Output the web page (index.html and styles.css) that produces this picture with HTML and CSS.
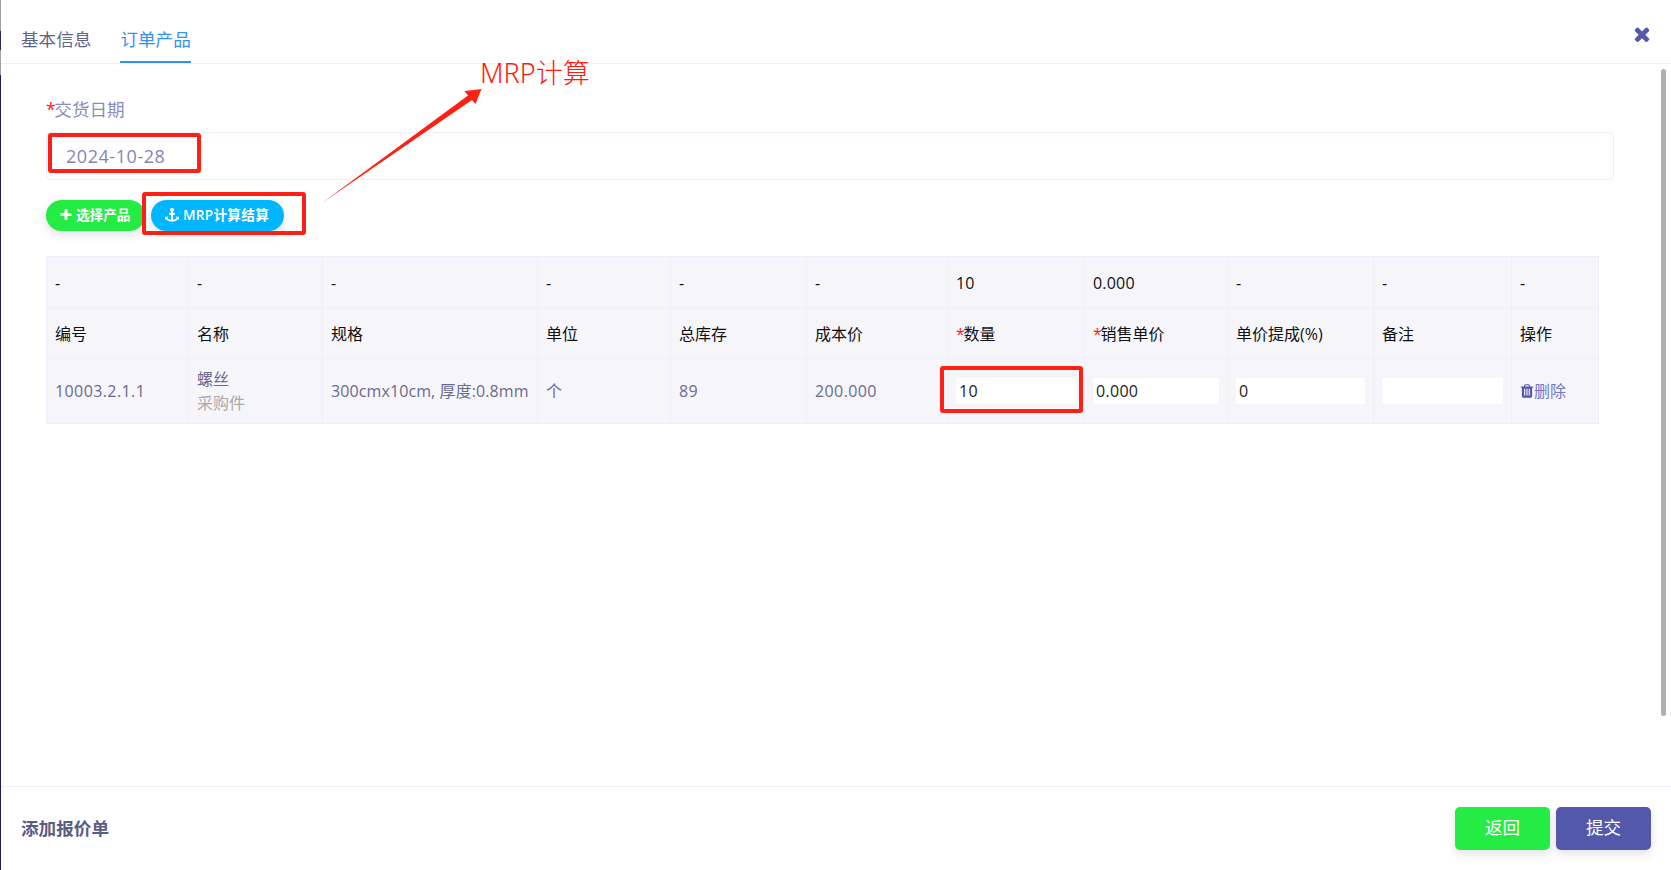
FILE: index.html
```html
<!DOCTYPE html>
<html lang="zh-CN">
<head>
<meta charset="utf-8">
<title>添加报价单</title>
<link rel="stylesheet" href="styles.css">
</head>
<body>
<div class="app">
  <div class="edge"></div>
  <div class="panel">
    <header class="tabs">
      <a class="tab">基本信息</a>
      <a class="tab tab-active">订单产品</a>
      <svg class="close" viewBox="0 0 1792 1792"><path d="M1490 1322q0 40-28 68l-136 136q-28 28-68 28t-68-28l-294-294-294 294q-28 28-68 28t-68-28l-136-136q-28-28-28-68t28-68l294-294-294-294q-28-28-28-68t28-68l136-136q28-28 68-28t68 28l294 294 294-294q28-28 68-28t68 28l136 136q28 28 28 68t-28 68l-294 294 294 294q28 28 28 68z"/></svg>
    </header>
    <main class="content">
      <label class="field-label"><span class="req">*</span>交货日期</label>
      <div class="date-input">2024-10-28</div>
      <div class="actions">
        <button class="pill pill-green"><svg class="pill-icon" viewBox="0 0 1792 1792"><path d="M1600 736v192q0 40-28 68t-68 28h-416v416q0 40-28 68t-68 28h-192q-40 0-68-28t-28-68v-416h-416q-40 0-68-28t-28-68v-192q0-40 28-68t68-28h416v-416q0-40 28-68t68-28h192q40 0 68 28t28 68v416h416q40 0 68 28t28 68z"/></svg>选择产品</button>
        <button class="pill pill-blue"><svg class="pill-icon" viewBox="0 0 1792 1792"><path d="M960 256q0-26-19-45t-45-19-45 19-19 45 19 45 45 19 45-19 19-45zm832 888v352q0 22-20 30-8 2-12 2-12 0-23-9l-93-93q-119 143-318.5 226.5t-429.5 83.5-429.5-83.5-318.5-226.5l-93 93q-9 9-23 9-4 0-12-2-20-8-20-30v-352q0-14 9-23t23-9h352q22 0 30 20 8 19-7 35l-100 100q67 91 189.5 153.5t271.5 82.5v-647h-192q-26 0-45-19t-19-45v-128q0-26 19-45t45-19h192v-163q-58-34-93-92.5t-35-128.5q0-106 75-181t181-75 181 75 75 181q0 70-35 128.5t-93 92.5v163h192q26 0 45 19t19 45v128q0 26-19 45t-45 19h-192v647q149-20 271.5-82.5t189.5-153.5l-100-100q-15-16-7-35 8-20 30-20h352q14 0 23 9t9 23z"/></svg>MRP计算结算</button>
      </div>
      <table class="grid">
        <colgroup>
          <col width="142"><col width="134"><col width="215"><col width="133"><col width="136"><col width="141"><col width="137"><col width="143"><col width="146"><col width="138"><col width="87">
        </colgroup>
        <tbody>
          <tr class="row-sum">
            <td>-</td><td>-</td><td>-</td><td>-</td><td>-</td><td>-</td><td class="num">10</td><td class="num">0.000</td><td>-</td><td>-</td><td>-</td>
          </tr>
          <tr class="row-head">
            <td>编号</td><td>名称</td><td>规格</td><td>单位</td><td>总库存</td><td>成本价</td><td><span class="req">*</span>数量</td><td><span class="req">*</span>销售单价</td><td>单价提成(%)</td><td>备注</td><td>操作</td>
          </tr>
          <tr class="row-item">
            <td class="num">10003.2.1.1</td>
            <td><div class="name">螺丝</div><div class="kind">采购件</div></td>
            <td class="spec">300cmx10cm, 厚度:0.8mm</td>
            <td>个</td>
            <td class="num">89</td>
            <td class="num">200.000</td>
            <td><input class="cell-input cell-qty" value="10"></td>
            <td><input class="cell-input" value="0.000"></td>
            <td><input class="cell-input" value="0"></td>
            <td><input class="cell-input" value=""></td>
            <td><a class="del"><svg class="del-icon" viewBox="0 0 1792 1792"><path d="M704 1376v-704q0-14-9-23t-23-9h-64q-14 0-23 9t-9 23v704q0 14 9 23t23 9h64q14 0 23-9t9-23zm256 0v-704q0-14-9-23t-23-9h-64q-14 0-23 9t-9 23v704q0 14 9 23t23 9h64q14 0 23-9t9-23zm256 0v-704q0-14-9-23t-23-9h-64q-14 0-23 9t-9 23v704q0 14 9 23t23 9h64q14 0 23-9t9-23zm-544-992h448l-48-117q-7-9-17-11h-317q-10 2-17 11zm928 32v64q0 14-9 23t-23 9h-96v948q0 83-47 143.5t-113 60.5h-832q-66 0-113-58.5t-47-141.5v-952h-96q-14 0-23-9t-9-23v-64q0-14 9-23t23-9h309l70-167q15-37 54-63t79-26h320q40 0 79 26t54 63l70 167h309q14 0 23 9t9 23z"/></svg>删除</a></td>
          </tr>
        </tbody>
      </table>
      <div class="scrollbar"></div>
    </main>
    <footer class="footer">
      <div class="footer-title">添加报价单</div>
      <div class="footer-btns">
        <button class="btn btn-green">返回</button>
        <button class="btn btn-indigo">提交</button>
      </div>
    </footer>
  </div>
  <div class="mark mark-date"></div>
  <div class="mark mark-mrp"></div>
  <div class="mark mark-qty"></div>
  <svg class="arrow" viewBox="0 0 1671 870"><polygon points="322,203 468,95.5 464.5,91 481.5,89 475.5,104 472,100"/></svg>
  <div class="note">MRP计算</div>
</div>
</body>
</html>
```
FILE: styles.css
```css
* { box-sizing: border-box; }
html, body { margin: 0; height: 100%; overflow: hidden; background: #fff; }
body { font-family: "Open Sans", "Noto Sans CJK SC", sans-serif; font-size: 16px; color: #6a6a8e; }

.app { position: relative; display: flex; width: 1671px; height: 870px; }
.edge { width: 1px; flex: none; background: linear-gradient(#a0a0a0 0, #a0a0a0 31px, #2a2a5c 31px, #2a2a5c 50px, #a0a0a0 50px, #a0a0a0 75px, #1e1e52 75px); }
.panel { flex: 1; display: flex; flex-direction: column; min-width: 0; }

.tabs { height: 64px; flex: none; display: flex; align-items: stretch; gap: 29px; padding: 0 18px 0 20px; border-bottom: 1px solid #efeffb; }
.tab { display: flex; align-items: center; padding-top: 17px; font-size: 17.6px; line-height: 24px; height: 63px; color: #5f6388; border-bottom: 2px solid transparent; }
.tab-active { color: #3492ee; border-bottom-color: #3492ee; }
.close { width: 22px; height: 22px; fill: #5458ab; margin-left: auto; margin-top: 23px; }

.content { flex: 1; position: relative; padding: 33px 0 0 45px; min-height: 0; }
.field-label { display: block; font-size: 17.6px; line-height: 24px; color: #8a8db8; }
.req { color: #ff1a1a; margin-right: -1.4px; }
.date-input { margin-top: 11px; width: 1568px; height: 48px; padding: 0 0 0 19px; border: 1px solid #ededfb; border-radius: 5px; font-size: 18px; line-height: 47px; color: #8585b5; letter-spacing: .55px; }

.actions { display: flex; gap: 6px; margin-top: 20px; }
.pill { display: flex; align-items: center; height: 31px; border: 0; border-radius: 16px; color: #fff; font: 600 13.6px/29px "Open Sans", "Noto Sans CJK SC", sans-serif; box-shadow: 0 4px 8px rgba(60, 60, 100, .14); }
.pill-green { width: 99px; padding: 0 0 2px 13px; background: #25ec45; }
.pill-blue { width: 133px; padding: 0 0 2px 14px; background: #00b6ff; letter-spacing: .3px; }
.pill-icon { width: 14px; height: 14px; margin-right: 3px; fill: #fff; flex: none; }
.pill-blue .pill-icon { margin-right: 4px; }

.grid { margin-top: 25px; width: 1552px; table-layout: fixed; border-collapse: collapse; background: #f6f6fa; color: #111; }
.grid td { padding: 0 8px; border: 1px solid #eeeefc; font-size: 16px; line-height: 25px; vertical-align: middle; white-space: nowrap; overflow: hidden; }
.row-sum, .row-head { height: 51px; }
.row-sum td, .row-head td { padding-top: 2px; }
.row-item { height: 65px; }
.row-item td { color: #6a6a8e; }
.row-item td.num { letter-spacing: .4px; }
.row-item td.spec { letter-spacing: .1px; }
.row-sum td.num { letter-spacing: .2px; }
.name { position: relative; top: 1px; }
.row-item .kind { color: #aaaaaa; }
.cell-input { display: block; width: 100%; height: 26px; padding: 0 3px; border: 0; background: #fff; color: #222; letter-spacing: .3px; font: 16px/26px "Open Sans", "Noto Sans CJK SC", sans-serif; outline: none; }
.cell-qty { width: 120px; }
.del { display: flex; align-items: center; color: #7477c4; margin-left: -1px; }
.del-icon { width: 16px; height: 16px; fill: #5458ab; flex: none; margin-right: -1px; }

.scrollbar { position: absolute; right: 5px; top: 5px; width: 5px; height: 647px; border-radius: 3px; background: #b0b0b0; }

.footer { height: 84px; flex: none; display: flex; justify-content: space-between; align-items: flex-start; padding: 20px 20px 0 20px; border-top: 1px solid #efeffb; }
.footer-title { font-size: 17.6px; font-weight: 700; line-height: 43px; color: #5b5c82; }
.footer-btns { display: flex; gap: 6px; }
.btn { width: 95px; height: 43px; padding: 0 0 2px; border: 0; border-radius: 5px; color: #fff; font: 17.6px/41px "Open Sans", "Noto Sans CJK SC", sans-serif; box-shadow: 0 4px 8px rgba(60, 60, 100, .14); }
.btn-green { background: #25ec45; }
.btn-indigo { background: #5458ab; }

.mark { position: absolute; border: 4px solid #ff2015; border-radius: 3px; }
.mark-date { left: 48px; top: 133px; width: 153px; height: 40px; }
.mark-mrp { left: 142px; top: 192px; width: 164px; height: 43px; }
.mark-qty { left: 940px; top: 366px; width: 143px; height: 47px; }
.arrow { position: absolute; left: 0; top: 0; width: 1671px; height: 870px; fill: #ff2015; pointer-events: none; }
.note { position: absolute; left: 480px; top: 54px; font-family: "Noto Sans", "Noto Sans CJK SC", sans-serif; font-size: 27px; font-weight: 300; line-height: 38px; color: #ff1a10; }
```
